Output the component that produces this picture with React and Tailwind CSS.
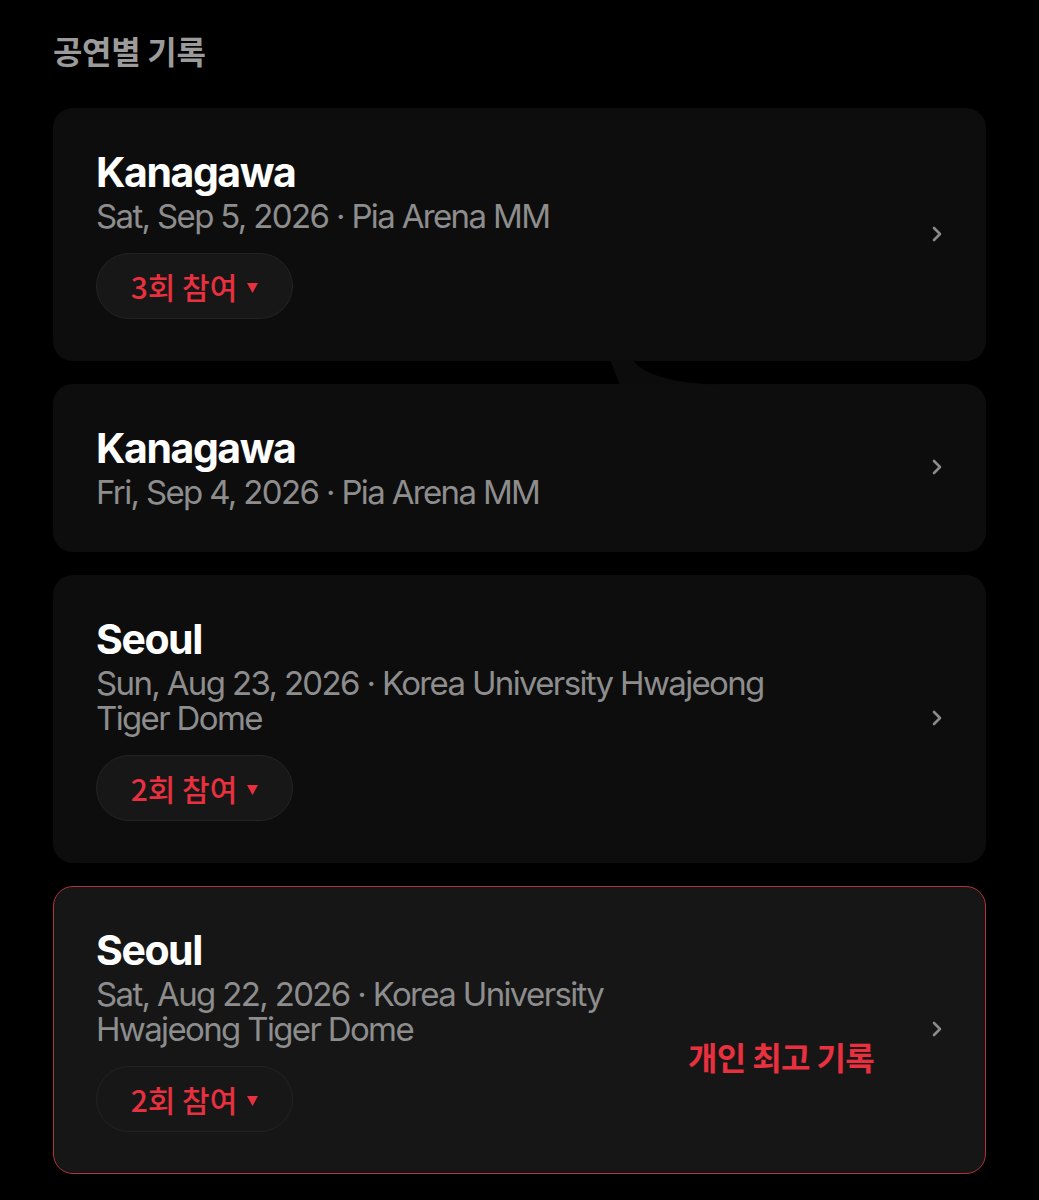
import React from 'react';

const shows = [
  { city: 'Kanagawa', lines: ['Sat, Sep 5, 2026 · Pia Arena MM'], count: 3 },
  { city: 'Kanagawa', lines: ['Fri, Sep 4, 2026 · Pia Arena MM'] },
  {
    city: 'Seoul',
    lines: ['Sun, Aug 23, 2026 · Korea University Hwajeong', 'Tiger Dome'],
    count: 2,
  },
  {
    city: 'Seoul',
    lines: ['Sat, Aug 22, 2026 · Korea University', 'Hwajeong Tiger Dome'],
    count: 2,
    best: true,
  },
];

const Chevron = () => (
  <svg width="12" height="18" viewBox="0 0 12 18" className="shrink-0">
    <path d="M3 3 L9 9 L3 15" fill="none" stroke="#8a8a8a" strokeWidth="2.6" strokeLinecap="round" strokeLinejoin="round" />
  </svg>
);

const CountPill = ({ count }) => (
  <button className="mt-[19px] flex h-[66px] w-[197px] items-center justify-center gap-[10px] rounded-full border border-[#232323] bg-[#171717] font-['Noto_Sans_CJK_KR',sans-serif] text-[30px] font-medium text-[#e8303f]">
    <span>{count}회 참여</span>
    <svg width="11" height="10" viewBox="0 0 11 10" className="mt-[4px]">
      <path d="M0 0 H11 L5.5 10 Z" fill="#e8303f" />
    </svg>
  </button>
);

const ShowCard = ({ show }) => (
  <div
    className={
      show.best
        ? 'flex items-center rounded-[20px] border border-[#b3323b] bg-[#161616] pt-[39px] pb-[41px] pl-[42px] pr-[42px]'
        : 'flex items-center rounded-[20px] bg-[#0d0d0d] pt-[40px] pb-[42px] pl-[43px] pr-[43px]'
    }
  >
    <div className="min-w-0 flex-1 font-['Inter',sans-serif]">
      <h3 className="text-[41px] font-bold leading-[48px] tracking-[-0.035em] text-white">{show.city}</h3>
      <div className="mt-[3px] text-[33px] tracking-[-0.05em] text-[#8d8d8d]">
        {show.lines.map((l, i) => (
          <p key={i} className="h-[35px] leading-[35px]">
            {l}
          </p>
        ))}
      </div>
      {show.count && <CountPill count={show.count} />}
    </div>
    {show.best && (
      <span className="mr-[57px] mt-[54px] font-['Noto_Sans_CJK_KR',sans-serif] text-[32px] font-bold tracking-[-0.02em] text-[#e8303f]">
        개인 최고 기록
      </span>
    )}
    <Chevron />
  </div>
);

export default function App() {
  return (
    <div className="min-h-screen bg-black px-[53px] pt-[30px] pb-[26px]">
      <h2 className="font-['Noto_Sans_CJK_KR',sans-serif] text-[32px] font-bold leading-[40px] tracking-[-0.01em] text-[#9b9b9b]">공연별 기록</h2>
      <div className="relative mt-[38px] flex flex-col gap-[23px]">
        {shows.map((s, i) => (
          <ShowCard key={i} show={s} />
        ))}
        <svg className="pointer-events-none absolute left-[557px] top-[252px]" width="120" height="25" viewBox="0 0 120 25">
          <path d="M0 0 L10 25 L120 25 Q40 24 23 0 Z" fill="#0c0c0c" />
        </svg>
      </div>
    </div>
  );
}
